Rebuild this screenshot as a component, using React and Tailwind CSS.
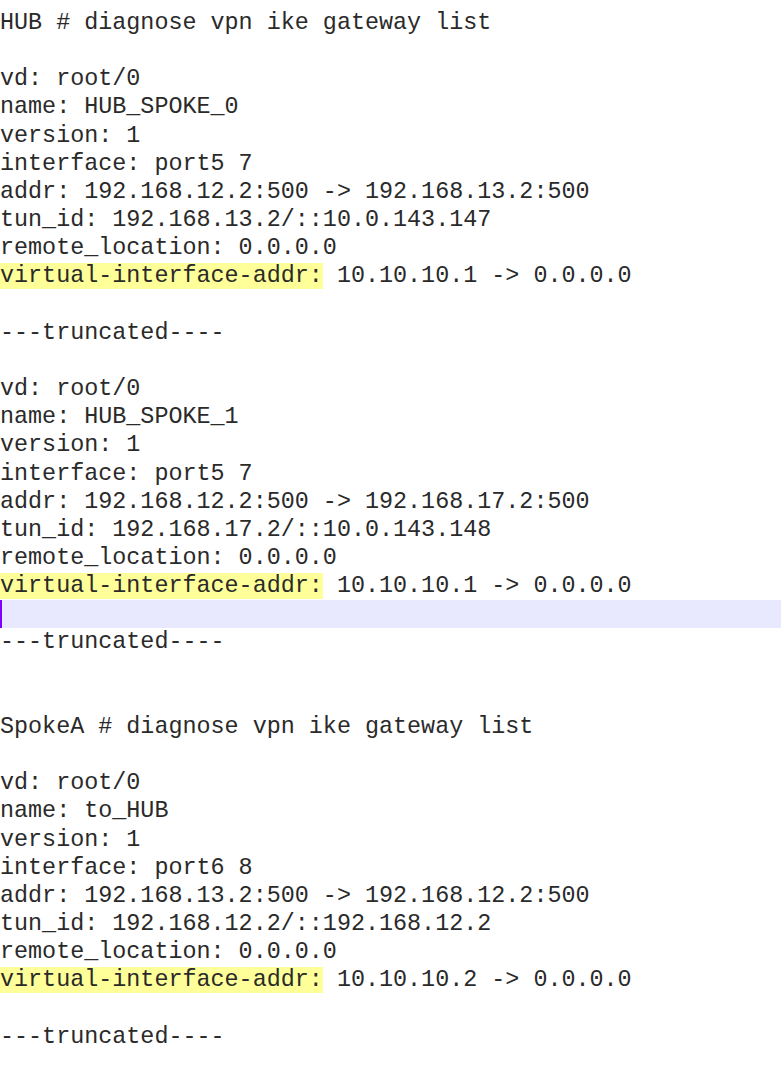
import React from 'react';

const HL = 'virtual-interface-addr:';

const lines = [
  'HUB # diagnose vpn ike gateway list',
  '',
  'vd: root/0',
  'name: HUB_SPOKE_0',
  'version: 1',
  'interface: port5 7',
  'addr: 192.168.12.2:500 -> 192.168.13.2:500',
  'tun_id: 192.168.13.2/::10.0.143.147',
  'remote_location: 0.0.0.0',
  'virtual-interface-addr: 10.10.10.1 -> 0.0.0.0',
  '',
  '---truncated----',
  '',
  'vd: root/0',
  'name: HUB_SPOKE_1',
  'version: 1',
  'interface: port5 7',
  'addr: 192.168.12.2:500 -> 192.168.17.2:500',
  'tun_id: 192.168.17.2/::10.0.143.148',
  'remote_location: 0.0.0.0',
  'virtual-interface-addr: 10.10.10.1 -> 0.0.0.0',
  '@cursor',
  '---truncated----',
  '',
  '',
  'SpokeA # diagnose vpn ike gateway list',
  '',
  'vd: root/0',
  'name: to_HUB',
  'version: 1',
  'interface: port6 8',
  'addr: 192.168.13.2:500 -> 192.168.12.2:500',
  'tun_id: 192.168.12.2/::192.168.12.2',
  'remote_location: 0.0.0.0',
  'virtual-interface-addr: 10.10.10.2 -> 0.0.0.0',
  '',
  '---truncated----',
];

const Line = ({ text }) => {
  // current line in the editor: lavender band + caret
  if (text === '@cursor') {
    return (
      <div className="h-[28.16px] bg-[#e8e8ff] border-l-2 border-[#8000ff]" />
    );
  }
  if (text.startsWith(HL)) {
    return (
      <div className="h-[28.16px] whitespace-pre">
        <span className="bg-[#ffff99]">{HL}</span>
        {text.slice(HL.length)}
      </div>
    );
  }
  return <div className="h-[28.16px] whitespace-pre">{text}</div>;
};

export default function App() {
  return (
    <div
      className="w-[781px] h-[1069px] bg-white overflow-hidden pt-[9px] text-[#2a2a2a] text-[23.4px] leading-[28.16px]"
      style={{ fontFamily: '"Liberation Mono", "Courier New", monospace' }}
    >
      {lines.map((l, i) => (
        <Line key={i} text={l} />
      ))}
    </div>
  );
}
